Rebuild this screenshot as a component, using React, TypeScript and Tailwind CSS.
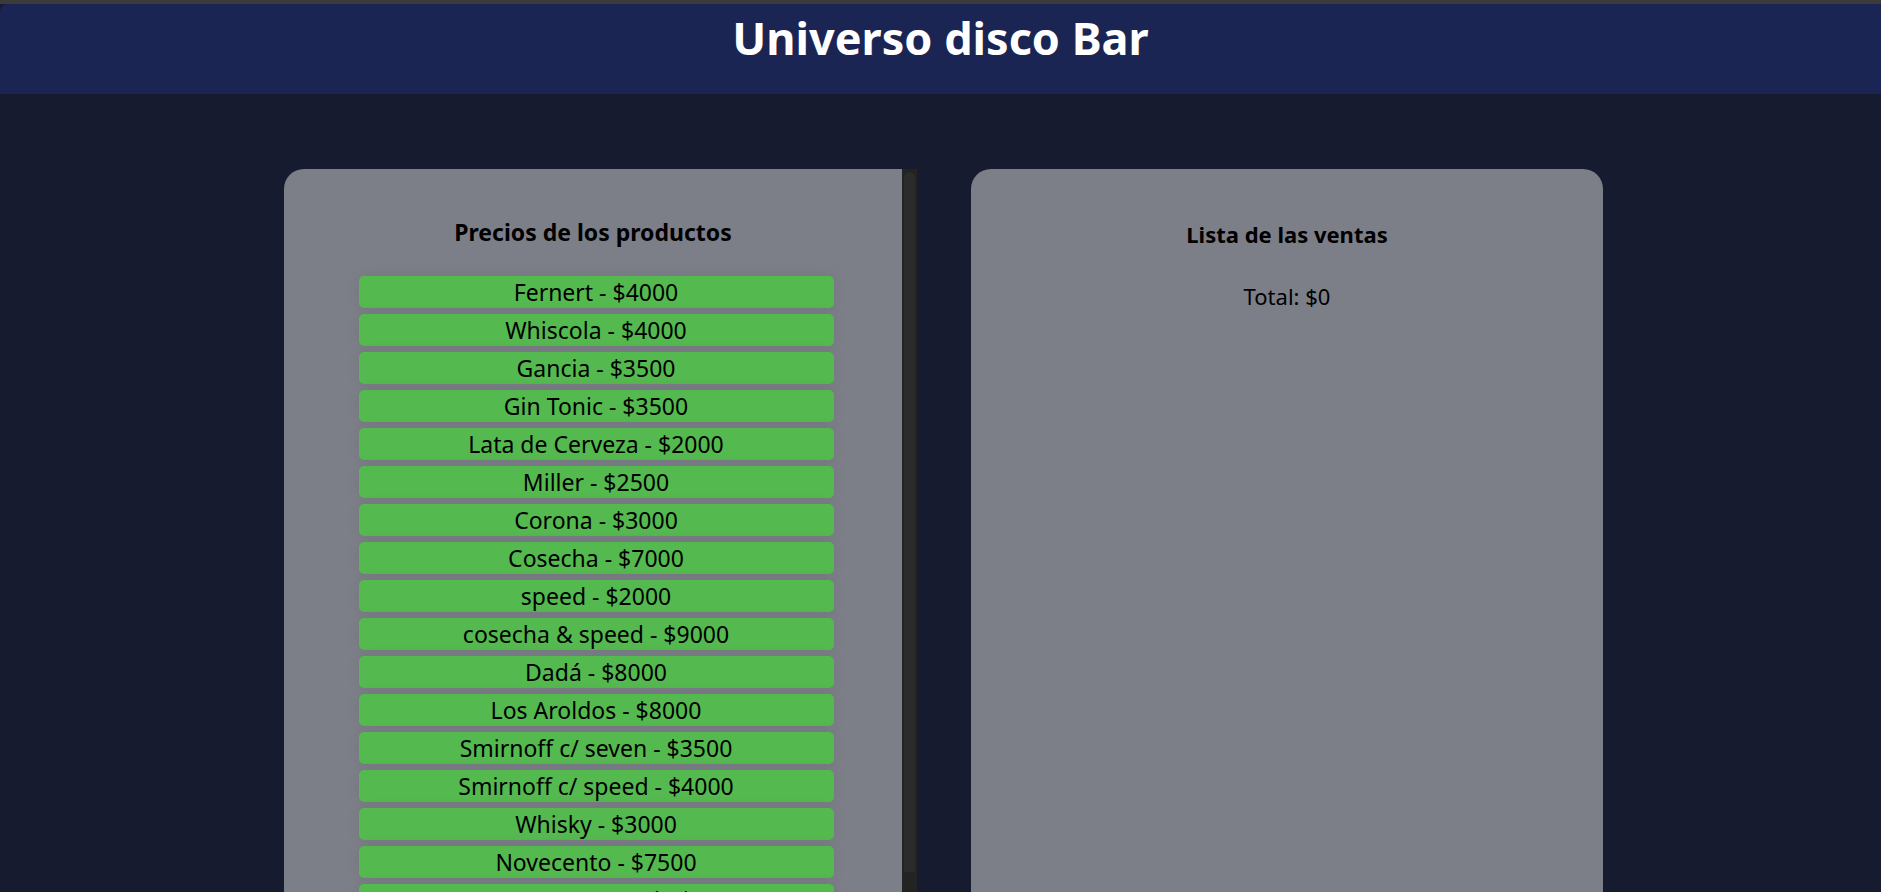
import React from "react"

const productos = [
  { nombre: "Fernert", precio: 4000 },
  { nombre: "Whiscola", precio: 4000 },
  { nombre: "Gancia", precio: 3500 },
  { nombre: "Gin Tonic", precio: 3500 },
  { nombre: "Lata de Cerveza", precio: 2000 },
  { nombre: "Miller", precio: 2500 },
  { nombre: "Corona", precio: 3000 },
  { nombre: "Cosecha", precio: 7000 },
  { nombre: "speed", precio: 2000 },
  { nombre: "cosecha & speed", precio: 9000 },
  { nombre: "Dadá", precio: 8000 },
  { nombre: "Los Aroldos", precio: 8000 },
  { nombre: "Smirnoff c/ seven", precio: 3500 },
  { nombre: "Smirnoff c/ speed", precio: 4000 },
  { nombre: "Whisky", precio: 3000 },
  { nombre: "Novecento", precio: 7500 },
  { nombre: "Novecento c/ speed", precio: 9500 },
  { nombre: "Agua", precio: 1500 },
  { nombre: "Gaseosa", precio: 2000 },
]

export default function App() {
  const ventas: { nombre: string; precio: number }[] = []
  const total = ventas.reduce((acc, v) => acc + v.precio, 0)

  return (
    <div className="h-screen overflow-hidden bg-[#171b30] font-['Noto_Sans',sans-serif] text-black">
      <div className="h-[4px] bg-[#3b3b3b]" />
      <header className="flex h-[90px] justify-center rounded-tl-[8px] bg-[#1b2553] pt-[6px]">
        <h1 className="text-[45px] font-bold leading-[56px] text-white">Universo disco Bar</h1>
      </header>

      <main className="flex justify-center gap-[54px] pl-[6px] pt-[75px]">
        {/* tarjeta de precios, con su barra de scroll */}
        <section className="flex h-[760px] w-[633px] overflow-hidden rounded-l-[20px] bg-[#7c7f88]">
          <div className="flex-1 pt-[47px]">
            <h2 className="text-center text-[23px] font-bold leading-[32px]">Precios de los productos</h2>
            <ul className="mt-[28px] flex flex-col items-center gap-[6px] pl-[6px]">
              {productos.map((p) => (
                <li key={p.nombre}>
                  <button className="h-[32px] w-[475px] rounded-[5px] bg-[#54b94e] text-[23px] leading-[32px] shadow-[0_0_14px_rgba(0,0,0,0.07)]">
                    {p.nombre} - ${p.precio}
                  </button>
                </li>
              ))}
            </ul>
          </div>
          <div className="w-[15px] bg-[#232323] px-[2px] pt-[3px]">
            <div className="h-[700px] rounded-t-[6px] bg-[#2b2b2b]" />
          </div>
        </section>

        <section className="h-[760px] w-[632px] rounded-[20px] bg-[#7c7f88] pt-[49px] text-center">
          <h2 className="text-[22px] font-bold leading-[32px]">Lista de las ventas</h2>
          <ul>
            {ventas.map((v, i) => (
              <li key={i}>{v.nombre} - ${v.precio}</li>
            ))}
          </ul>
          <p className="mt-[31px] text-[22px] leading-[30px]">Total: ${total}</p>
        </section>
      </main>
    </div>
  )
}
